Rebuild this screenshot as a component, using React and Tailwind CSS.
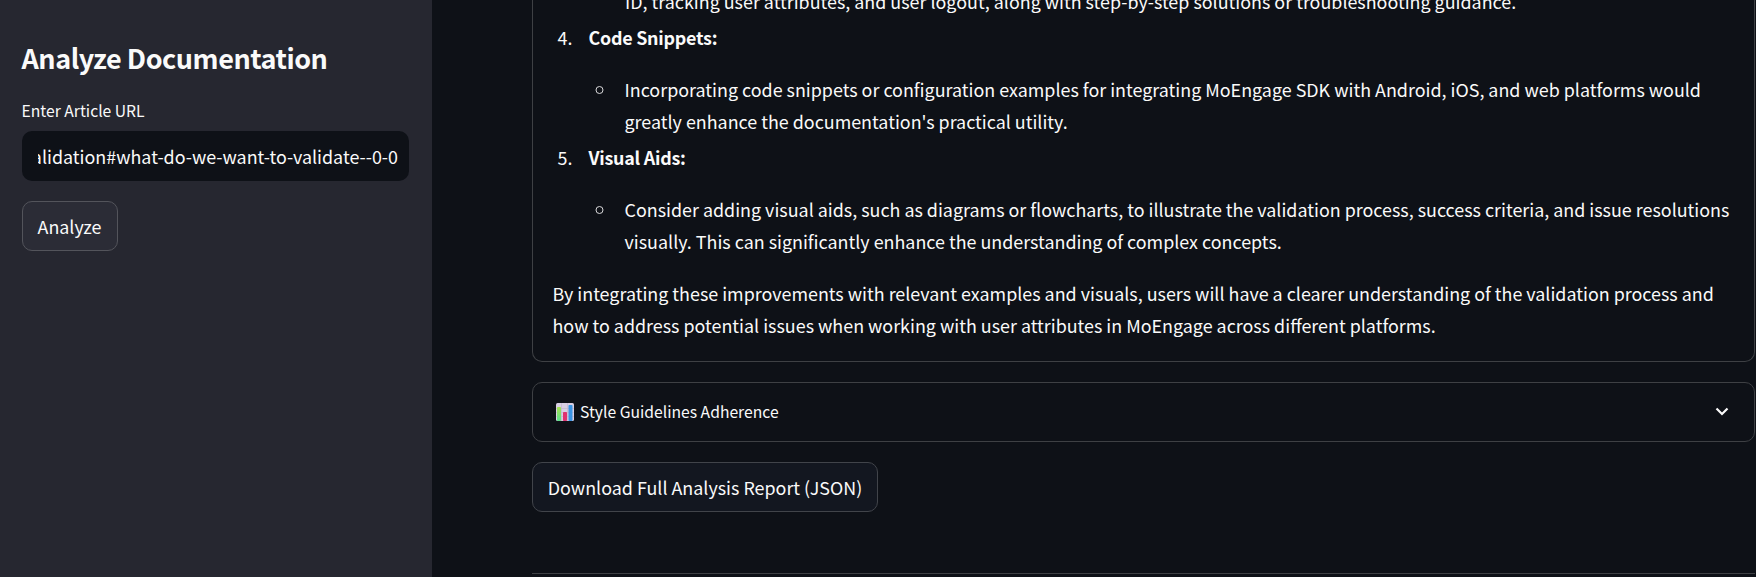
const items = [
  {
    number: '4.',
    title: 'Code Snippets:',
    lines: [
      'Incorporating code snippets or configuration examples for integrating MoEngage SDK with Android, iOS, and web platforms would',
      "greatly enhance the documentation's practical utility.",
    ],
  },
  {
    number: '5.',
    title: 'Visual Aids:',
    lines: [
      'Consider adding visual aids, such as diagrams or flowcharts, to illustrate the validation process, success criteria, and issue resolutions',
      'visually. This can significantly enhance the understanding of complex concepts.',
    ],
  },
];

function BarChartIcon() {
  return (
    <svg width="18" height="18" viewBox="0 0 18 18" className="shrink-0">
      <defs>
        <linearGradient id="greenBar" x1="0" y1="0" x2="0" y2="1">
          <stop offset="0" stopColor="#a5e04f" />
          <stop offset="1" stopColor="#5be08c" />
        </linearGradient>
      </defs>
      <rect width="18" height="18" rx="1.5" fill="#d9cfe3" />
      <path d="M0 5.5h18M0 9.5h18M0 13.5h18M5.5 0v18M11.5 0v18" stroke="#c3b8d0" strokeWidth="0.7" />
      <rect x="1" y="4" width="4" height="14" rx="0.8" fill="url(#greenBar)" />
      <rect x="7" y="9" width="4" height="9" rx="0.8" fill="#e0326f" />
      <rect x="12.5" y="2" width="4" height="16" rx="0.8" fill="#3b94e4" />
    </svg>
  );
}

function Sidebar() {
  return (
    <aside className="flex h-full w-[432px] shrink-0 flex-col items-start bg-[#262730] pl-[22px] pr-[23px] pt-10">
      <h2 className="-ml-[0.5px] text-[27px] font-bold leading-9 tracking-[-0.46px]">Analyze Documentation</h2>
      <label className="-ml-[0.5px] mt-[23px] text-[15.7px] leading-6">Enter Article URL</label>
      <div className="mt-2 flex h-[50px] w-full items-center rounded-[10px] bg-[#0e1117] pl-4 pr-[11px]">
        <div className="flex h-8 w-full justify-end overflow-hidden whitespace-nowrap leading-8">
          alidation#what-do-we-want-to-validate--0-0
        </div>
      </div>
      <button className="mt-5 h-[50px] w-24 rounded-[10px] border border-[#53545b] bg-[#2b2c36] pr-px">Analyze</button>
    </aside>
  );
}

export default function App() {
  return (
    <div className="flex h-[577px] w-[1756px] overflow-hidden bg-[#0e1117] font-['Noto_Sans_CJK_SC',sans-serif] text-[17.9px] text-[#fafafa]">
      <Sidebar />
      <main className="flex h-full w-[1324px] flex-col items-start pl-[100px] pr-px">
        <section className="flex h-[362px] w-full shrink-0 flex-col justify-end rounded-b-[10px] border border-t-0 border-[#3e4044] pb-5 pl-[19.5px] whitespace-nowrap leading-8">
          <p className="pl-[72.5px]">
            ID, tracking user attributes, and user logout, along with step-by-step solutions or troubleshooting guidance.
          </p>
          {items.map((item) => (
            <div key={item.number} className="mt-1">
              <div className="flex">
                <span className="w-9 pl-[5px]">{item.number}</span>
                <strong className="font-bold tracking-[-0.25px]">{item.title}</strong>
              </div>
              <div className="mt-5 flex">
                <svg width="72" height="32" className="shrink-0">
                  <circle cx="46.5" cy="17" r="3.5" fill="none" stroke="#d8d8da" />
                </svg>
                <div>
                  {item.lines.map((line) => (
                    <p key={line}>{line}</p>
                  ))}
                </div>
              </div>
            </div>
          ))}
          <p className="mt-5">
            By integrating these improvements with relevant examples and visuals, users will have a clearer understanding of the validation process and
          </p>
          <p>how to address potential issues when working with user attributes in MoEngage across different platforms.</p>
        </section>
        <section className="mt-5 flex h-[60px] w-full shrink-0 items-center rounded-[10px] border border-[#3e4044] pl-[23px] pr-[25.5px] text-[15.7px]">
          <BarChartIcon />
          <span className="ml-[6px] whitespace-nowrap">Style Guidelines Adherence</span>
          <svg width="14" height="10" viewBox="0 0 14 10" fill="none" className="mb-px ml-auto">
            <path d="M1.5 1.5 7 7l5.500-5.500" stroke="#fafafa" strokeWidth="2.200" />
          </svg>
        </section>
        <button className="mt-5 h-[50px] w-[346px] shrink-0 whitespace-nowrap rounded-[10px] border border-[#41444a] bg-[#131720]">
          Download Full Analysis Report (JSON)
        </button>
        <hr className="mt-[61px] w-full border-t border-[#3e4044]" />
      </main>
    </div>
  );
}
